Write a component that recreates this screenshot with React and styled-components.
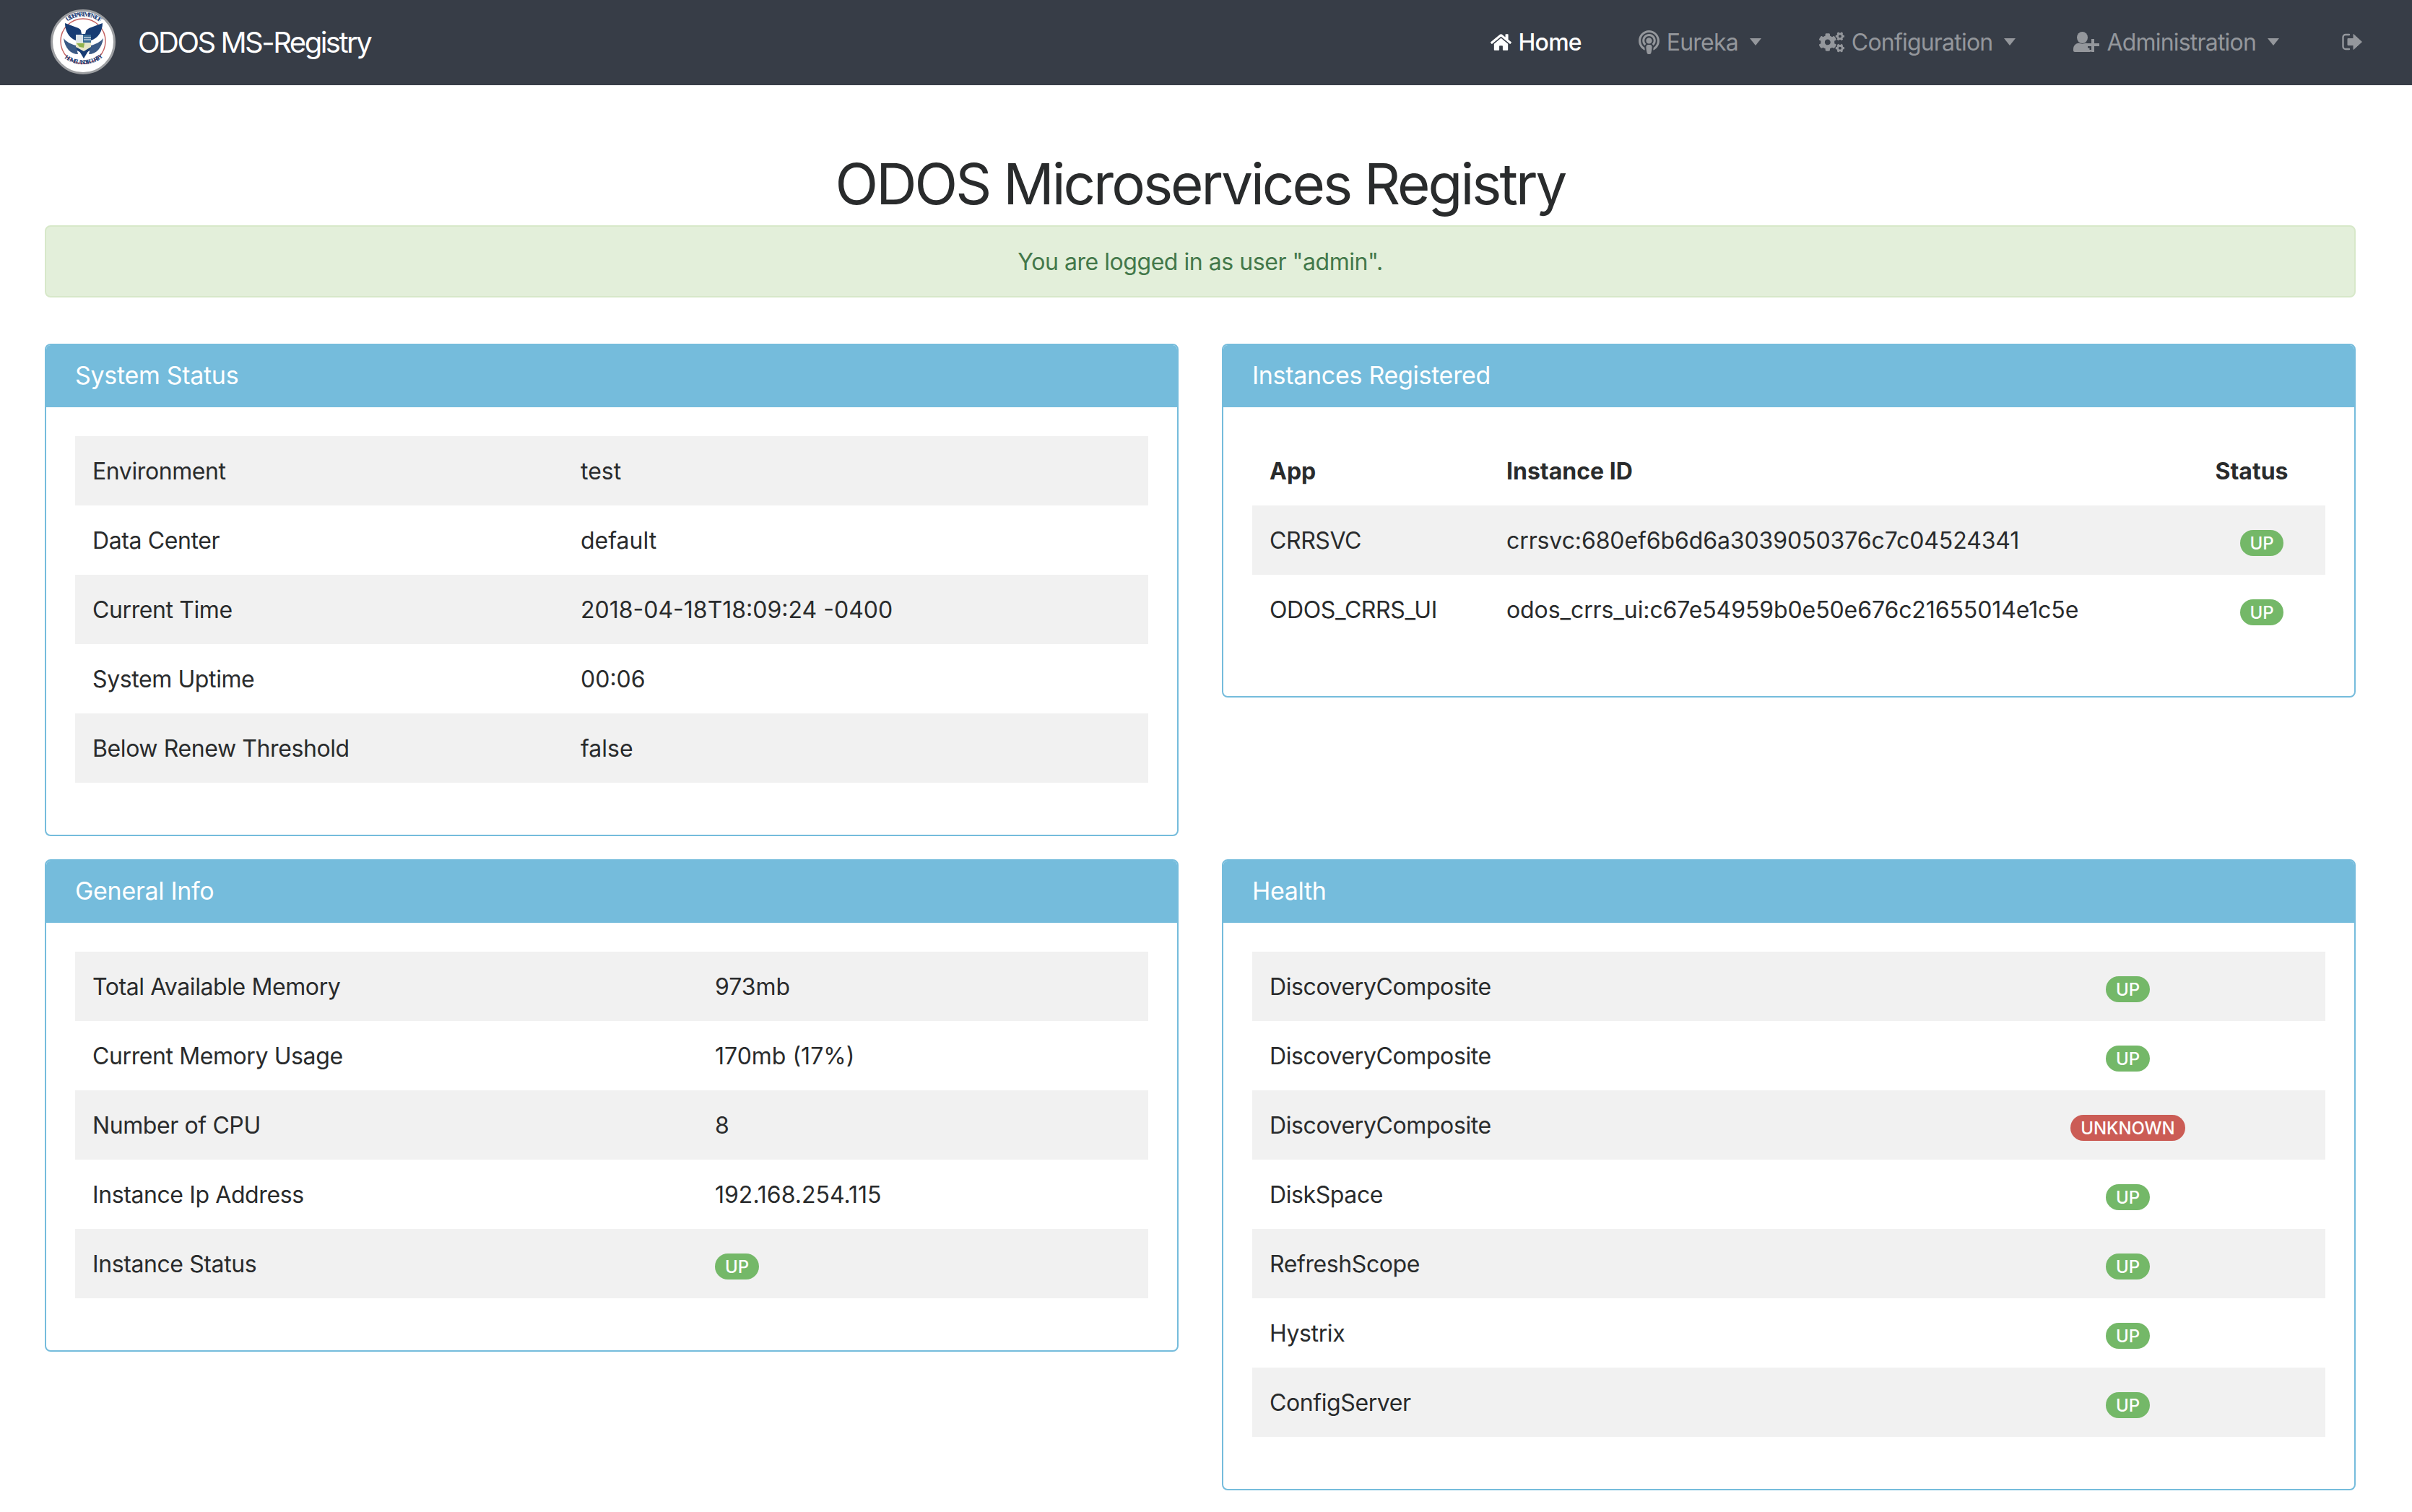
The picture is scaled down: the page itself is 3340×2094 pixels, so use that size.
import React from 'react';
import styled, { createGlobalStyle } from 'styled-components';
import { FaHome, FaPodcast, FaCogs } from 'react-icons/fa';

const GlobalStyle = createGlobalStyle`
  html, body {
    margin: 0;
    padding: 0;
    background: #ffffff;
    font-family: Inter, "Liberation Sans", sans-serif;
    font-size: 32px;
    color: #292b2c;
  }
  * { box-sizing: border-box; }
`;

function Seal() {
  return (
    <svg width="90" height="90" viewBox="0 0 90 90">
      <defs>
        <path id="sealTop" d="M 9 52 A 36.5 36.5 0 1 1 81 52" />
        <path id="sealBottom" d="M 3 40 A 42.5 42.5 0 0 0 87 40" />
      </defs>
      <circle cx="45" cy="45" r="43.5" fill="#ffffff" stroke="#9c9ea1" strokeWidth="3" />
      <circle cx="45" cy="44" r="31" fill="#ffffff" stroke="#c4605f" strokeWidth="1.4" />
      <text fontFamily="Liberation Serif, serif" fontSize="8.6" fontWeight="700" fill="#1f3f77">
        <textPath href="#sealTop" startOffset="50%" textAnchor="middle">U.S. DEPARTMENT OF</textPath>
      </text>
      <text fontFamily="Liberation Serif, serif" fontSize="8.6" fontWeight="700" fill="#1f3f77">
        <textPath href="#sealBottom" startOffset="50%" textAnchor="middle">HOMELAND SECURITY</textPath>
      </text>
      <path d="M20 19 L36 25 C39 26 41 27 42 29 L50 29 C51 27 53 26 56 25 L72 19 C72 30 66 40 56 43 L56 56 L46 62 L35 56 L35 43 C26 40 20 30 20 19 Z" fill="#173c74" />
      <path d="M18 40 C22 45 28 48 35 50 L38 62 C28 62 20 54 18 40 Z" fill="#3b5a85" />
      <path d="M73 40 C69 45 63 48 56 50 L53 62 C63 62 71 54 73 40 Z" fill="#3b5a85" />
      <path d="M41 25 C43 23 48 23 50 26 L48 34 L43 34 Z" fill="#ffffff" />
      <path d="M35 35 H45 V46 H35 Z" fill="#dde5ea" />
      <path d="M45 35 H56 V46 H45 Z" fill="#3a6c96" />
      <path d="M46 39 H56 M46 42 H56" stroke="#ffffff" strokeWidth="1" />
      <path d="M35 46 H56 V52 L46 58 L35 52 Z" fill="#e8e6c8" />
      <path d="M36 47 H47 L46 53 L40 52 Z" fill="#8fb24c" />
      <path d="M40 58 L46 68 L52 58 Z" fill="#173c74" />
    </svg>
  );
}

function UserPlusIcon() {
  return (
    <svg width="36" height="28" viewBox="0 0 36 28" fill="currentColor">
      <ellipse cx="12.5" cy="8" rx="7.5" ry="8" />
      <path d="M0 24 C0 19 4 15.500 8 15.500 C10 17 15 17 17 15.500 C21 15.500 25 19 25 24 V26 C25 27 24 28 23 28 H2 C1 28 0 27 0 26 Z" />
      <path d="M27 11 V25 M20 18 H34" stroke="#373d47" strokeWidth="9" fill="none" />
      <path d="M27 10 V28 M18 18 H36" stroke="currentColor" strokeWidth="4" fill="none" />
    </svg>
  );
}

function LogoutIcon() {
  return (
    <svg width="28" height="24" viewBox="0 0 28 24" fill="currentColor">
      <path d="M10 2 H5 a3.500 3.500 0 0 0 -3.500 3.500 V18.500 a3.500 3.500 0 0 0 3.500 3.500 H10" stroke="currentColor" strokeWidth="2.400" fill="none" strokeLinecap="round" />
      <path d="M8 7.500 H16 V1.500 L27.500 12 L16 22.500 V16.500 H8 Z" stroke="currentColor" strokeWidth="1" strokeLinejoin="round" />
    </svg>
  );
}

const NavBar = styled.nav`
  height: 118px;
  background: #373d47;
  display: flex;
  align-items: center;
  padding: 0 69px 2px 70px;
`;
const Brand = styled.a`
  display: flex;
  align-items: center;
  gap: 31px;
  color: #ffffff;
  font-size: 40px;
  letter-spacing: -2.5px;
`;
const NavList = styled.div`
  margin-left: auto;
  display: flex;
  align-items: center;
  gap: 80px;
`;
const NavItem = styled.a`
  display: flex;
  align-items: center;
  gap: 10px;
  font-size: 32px;
  letter-spacing: -0.8px;
  font-weight: ${p => (p.$active ? 500 : 400)};
  color: ${p => (p.$active ? '#ffffff' : '#94979c')};
  svg { flex: none; }
`;
const LogoutItem = styled(NavItem)`
  margin-left: 7px;
`;
const PodcastIcon = styled(FaPodcast)`
  margin: 0 -2.5px;
`;
const Caret = styled.span`
  width: 0;
  height: 0;
  margin-left: 6px;
  border-top: 10px solid #94979c;
  border-left: 8px solid transparent;
  border-right: 8px solid transparent;
`;
const Main = styled.main`
  padding: 0 78px 0 62px;
`;
const Title = styled.h1`
  margin: 0;
  padding-top: 80px;
  font-size: 78px;
  font-weight: 400;
  line-height: 114px;
  letter-spacing: -3px;
  text-align: center;
  color: #292b2c;
`;
const Alert = styled.div`
  height: 100px;
  display: flex;
  align-items: center;
  justify-content: center;
  background: #e3efda;
  border: 2px solid #d7e8c9;
  border-radius: 8px;
  color: #43784a;
  letter-spacing: -0.45px;
`;
const Columns = styled.div`
  margin-top: 64px;
  display: grid;
  grid-template-columns: 1fr 1fr;
  column-gap: 60px;
  row-gap: 32px;
  align-items: start;
`;
const Card = styled.section`
  border: 2px solid #75bcdc;
  border-radius: 8px;
  overflow: hidden;
`;
const CardHeader = styled.header`
  height: 88px;
  margin: -2px -2px 0;
  padding: 0 42px 2px;
  display: flex;
  align-items: center;
  background: #75bcdc;
  color: #ffffff;
  font-size: 34px;
  letter-spacing: -0.3px;
`;
const CardBody = styled.div`
  padding: 40px 40px 72px;
`;
const Row = styled.div`
  height: 96px;
  display: grid;
  grid-template-columns: ${p => p.$cols};
  align-items: center;
  padding: 0 24px;
  background: ${p => (p.$plain ? 'transparent' : '#f1f1f1')};
  font-weight: ${p => (p.$head ? 700 : 400)};
  letter-spacing: ${p => (p.$head ? 0 : '-0.4px')};
`;
const Value = styled.span`
  letter-spacing: 0;
`;
const InstanceId = styled.span`
  letter-spacing: -0.1px;
`;
const Centered = styled.span`
  display: flex;
  justify-content: center;
  padding-left: ${p => p.$left || 0}px;
  padding-right: ${p => p.$right || 0}px;
`;
const Badge = styled.span`
  display: inline-flex;
  align-items: center;
  justify-content: center;
  height: 36px;
  margin-top: 8px;
  padding: 0 14px;
  border-radius: 18px;
  background: ${p => (p.$danger ? '#cb5c55' : '#74b868')};
  color: #ffffff;
  font-size: 24px;
  font-weight: 500;
  letter-spacing: -0.1px;
`;

const systemStatus = [
  ['Environment', 'test'],
  ['Data Center', 'default'],
  ['Current Time', '2018-04-18T18:09:24 -0400'],
  ['System Uptime', '00:06'],
  ['Below Renew Threshold', 'false'],
];
const generalInfo = [
  ['Total Available Memory', '973mb'],
  ['Current Memory Usage', '170mb (17%)'],
  ['Number of CPU', '8'],
  ['Instance Ip Address', '192.168.254.115'],
];
const healthRows = [
  ['DiscoveryComposite', 'UP'],
  ['DiscoveryComposite', 'UP'],
  ['DiscoveryComposite', 'UNKNOWN'],
  ['DiskSpace', 'UP'],
  ['RefreshScope', 'UP'],
  ['Hystrix', 'UP'],
  ['ConfigServer', 'UP'],
];
const instances = [
  ['CRRSVC', 'crrsvc:680ef6b6d6a3039050376c7c04524341'],
  ['ODOS_CRRS_UI', 'odos_crrs_ui:c67e54959b0e50e676c21655014e1c5e'],
];

const statusCols = '676px 1fr';
const infoCols = '862px 1fr';
const instanceCols = '328px 1fr 150px';
const healthCols = '1fr 317px 91px';

export default function App() {
  return (
    <>
      <GlobalStyle />
      <NavBar>
        <Brand><Seal />ODOS MS-Registry</Brand>
        <NavList>
          <NavItem $active><FaHome size={29} />Home</NavItem>
          <NavItem><PodcastIcon size={33} />Eureka<Caret /></NavItem>
          <NavItem><FaCogs size={35} />Configuration<Caret /></NavItem>
          <NavItem><UserPlusIcon />Administration<Caret /></NavItem>
          <LogoutItem><LogoutIcon /></LogoutItem>
        </NavList>
      </NavBar>
      <Main>
        <Title>ODOS Microservices Registry</Title>
        <Alert>You are logged in as user "admin".</Alert>
        <Columns>
          <Card>
            <CardHeader>System Status</CardHeader>
            <CardBody>
              {systemStatus.map(([k, v], i) => (
                <Row key={k} $cols={statusCols} $plain={i % 2 === 1}><span>{k}</span><Value>{v}</Value></Row>
              ))}
            </CardBody>
          </Card>
          <Card>
            <CardHeader>Instances Registered</CardHeader>
            <CardBody>
              <Row $cols={instanceCols} $plain $head><span>App</span><span>Instance ID</span><Centered $right={6}>Status</Centered></Row>
              {instances.map(([a, id], i) => (
                <Row key={a} $cols={instanceCols} $plain={i % 2 === 1}>
                  <span>{a}</span><InstanceId>{id}</InstanceId><Centered $left={22}><Badge>UP</Badge></Centered>
                </Row>
              ))}
            </CardBody>
          </Card>
          <Card>
            <CardHeader>General Info</CardHeader>
            <CardBody>
              {generalInfo.map(([k, v], i) => (
                <Row key={k} $cols={infoCols} $plain={i % 2 === 1}><span>{k}</span><Value>{v}</Value></Row>
              ))}
              <Row $cols={infoCols}><span>Instance Status</span><span><Badge>UP</Badge></span></Row>
            </CardBody>
          </Card>
          <Card>
            <CardHeader>Health</CardHeader>
            <CardBody>
              {healthRows.map(([k, v], i) => (
                <Row key={i} $cols={healthCols} $plain={i % 2 === 1}>
                  <span>{k}</span><Centered><Badge $danger={v !== 'UP'}>{v}</Badge></Centered><span />
                </Row>
              ))}
            </CardBody>
          </Card>
        </Columns>
      </Main>
    </>
  );
}
